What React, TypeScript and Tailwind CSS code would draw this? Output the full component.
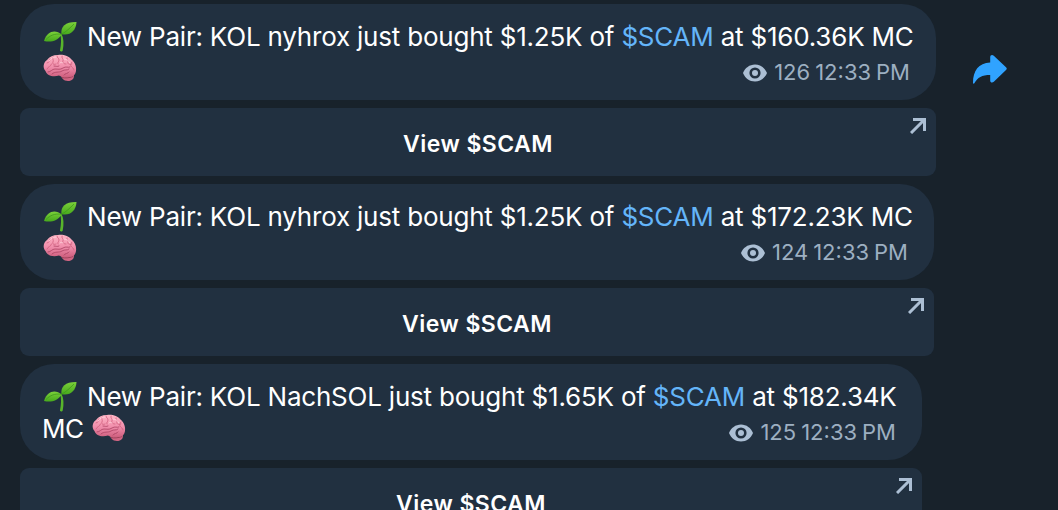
interface Message {
  width: string;
  kol: string;
  amount: string;
  cap: string;
  wrapped: boolean;
  views: number;
}

const messages: Message[] = [
  { width: 'w-[916px]', kol: 'nyhrox', amount: '$1.25K', cap: '$160.36K', wrapped: false, views: 126 },
  { width: 'w-[914px]', kol: 'nyhrox', amount: '$1.25K', cap: '$172.23K', wrapped: false, views: 124 },
  { width: 'w-[902px]', kol: 'NachSOL', amount: '$1.65K', cap: '$182.34K', wrapped: true, views: 125 },
];

function Sprout() {
  return (
    <svg className="h-8 w-9 shrink-0" viewBox="0 0 36 32" fill="none">
      <defs>
        <linearGradient id="leaf" x1="0" y1="0" x2="0" y2="1">
          <stop offset="0" stopColor="#7cd13a" />
          <stop offset="1" stopColor="#46a81c" />
        </linearGradient>
      </defs>
      <path d="M19.5 13c2.2 4 2.6 10 1.2 16.5-.4 1.4-3 1.300-2.700-.2C19.300 23 19.400 17.500 18.300 13.500Z" fill="#58b52b" />
      <path d="M19.600 13.400C14 8.800 5.500 8.900 2 20c6.500 1.600 13.500.3 17.600-6.600Z" fill="url(#leaf)" />
      <path d="M19.400 13.200C18.600 5.500 23.500.8 34.500 1c-.4 8.500-6.300 14.200-15.100 12.200Z" fill="url(#leaf)" />
      <path d="M4 18.500c4-4 8.500-6.200 15.400-5.200C24 11 28 7 32 3" stroke="#3b941b" strokeWidth="0.7" />
    </svg>
  );
}

function BrainEmoji() {
  return (
    <svg className="mt-px h-7 w-9 shrink-0" viewBox="0 0 36 28" fill="none">
      <defs>
        <linearGradient id="brain" x1="0" y1="0" x2="0" y2="1">
          <stop offset="0" stopColor="#ffb6c6" />
          <stop offset="0.55" stopColor="#f08dab" />
          <stop offset="1" stopColor="#cf607f" />
        </linearGradient>
      </defs>
      <path d="M19 20c-.5 3.500 2.500 7 7 7 4 0 6.500-2.500 5.800-6Z" fill="#cf6482" />
      <path d="M20 23.500c3 .8 7 .5 11-1" stroke="#933850" strokeWidth="0.8" />
      <path d="M3.500 17C.500 14 1.300 8.500 5 6 7.500 2.500 12 .8 16 1c5-.8 11 1 13.500 4.500 4 3 5.300 8.500 4.300 12.500-.8 4-4.600 5.700-8.300 4.200-3.500 1.300-6.500.6-8.500-.7C11 23.500 5 21.500 3.500 17Z" fill="url(#brain)" />
      <g stroke="#cf5f7e" strokeWidth="0.8" strokeLinecap="round">
        <path d="M5 15c1-3 4-2 4.500-5M5 9c2-.5 3-2 3-4M11 3c-1 2 1 3 0 5s1 3 3 2M15 2c0 2 2 2 2 4s-2 2-1 4M20 2c-1 2 2 3 1 5s1 3 3 3M25 4c-1 2 2 2 1 4s2 3 4 2M30 8c-1 2-2 2-1 4s3 2 3 4" />
        <path d="M6 18c3 0 4-3 7-3s5 1 8-1 5 0 7-1M10 20c3-3 7-1 10-3s5 0 7-2M22 21c1-2 4-1 5-3M12 12c2 0 3 1 5 0" stroke="#ab4162" />
      </g>
      <path d="M7 7c2-3 5-4 7-4M22 5c3 0 5 2 6 4M18 9c1-1 2-1 3 0" stroke="#ffd7df" strokeWidth="0.8" strokeLinecap="round" />
    </svg>
  );
}

function EyeIcon() {
  return (
    <svg className="mt-0.5 h-[18px] w-6" viewBox="0 0 24 18">
      <path fillRule="evenodd" fill="#acbfd4" d="M12 .5C6.500.5 2 4 0 9c2 5 6.500 8.500 12 8.500S22 14 24 9C22 4 17.500.5 12 .5Zm0 14.100a5.600 5.600 0 1 1 0-11.200 5.600 5.600 0 0 1 0 11.200Z" />
      <circle cx="12" cy="9" r="3" fill="#acbfd4" />
    </svg>
  );
}

function ShareArrow() {
  return (
    <svg className="h-8 w-9" viewBox="0 0 36 32">
      <path d="M18.200 3.200c0-2.200 2-2.900 3.600-1.400L34 13.200c1 .9 1 1.800 0 2.700L21.800 27.800c-1.600 1.500-3.600.8-3.600-1.300v-5.600C10 20.900 5.500 23.400 2.500 29.100c-.5.900-1.500.7-1.500-.3C1 17 6.500 8.900 18.200 8.500Z" fill="#30a3ff" />
    </svg>
  );
}

function MessageCard({ message }: { message: Message }) {
  return (
    <div className={`flex shrink-0 flex-col gap-2 ${message.width}`}>
      <div className="h-24 rounded-[34px] bg-[#213040] pt-[17px] pr-[26px] pl-[22px]">
        <div className="flex h-8 text-[26px] leading-8 tracking-[-0.21px] whitespace-nowrap text-white">
          <Sprout />
          <p className="ml-[9px]">
            New Pair: KOL {message.kol} just bought {message.amount} of{' '}
            <span className="text-[#64b5f9]">$SCAM</span> at {message.cap}
            {!message.wrapped && ' MC'}
          </p>
        </div>
        <div className="flex h-8 items-start justify-between">
          <div className="flex gap-2 text-[26px] leading-8 tracking-[-0.5px] text-white">
            {message.wrapped && <span>MC</span>}
            <BrainEmoji />
          </div>
          <div className="flex items-center gap-[7px] pt-1 text-[22px] leading-[30px] text-[#9dafc1]">
            <EyeIcon />
            <span className="flex gap-[5px] whitespace-nowrap">
              <span>{message.views}</span>
              <span>12:33</span>
              <span>PM</span>
            </span>
          </div>
        </div>
      </div>
      <button className="relative h-[68px] rounded-[9px] bg-[#213040] pt-1 text-center text-[23px] font-semibold tracking-[0.45px] text-white">
        View $SCAM
        <svg className="absolute top-2.5 right-2.5 size-4" viewBox="0 0 16 16" fill="none" stroke="#acbfd4" strokeWidth="3">
          <path d="M3 1.500h11.500V13M14.300 1.700 1 15" />
        </svg>
      </button>
    </div>
  );
}

export default function App() {
  return (
    <main className="flex h-[510px] w-[1058px] gap-9 overflow-hidden bg-[#18222b] pt-1 pl-5 font-['Inter',sans-serif]">
      <div className="flex flex-col gap-2">
        {messages.map((message) => (
          <MessageCard key={message.views} message={message} />
        ))}
      </div>
      <button className="mt-[50px] h-8" aria-label="Share">
        <ShareArrow />
      </button>
    </main>
  );
}
